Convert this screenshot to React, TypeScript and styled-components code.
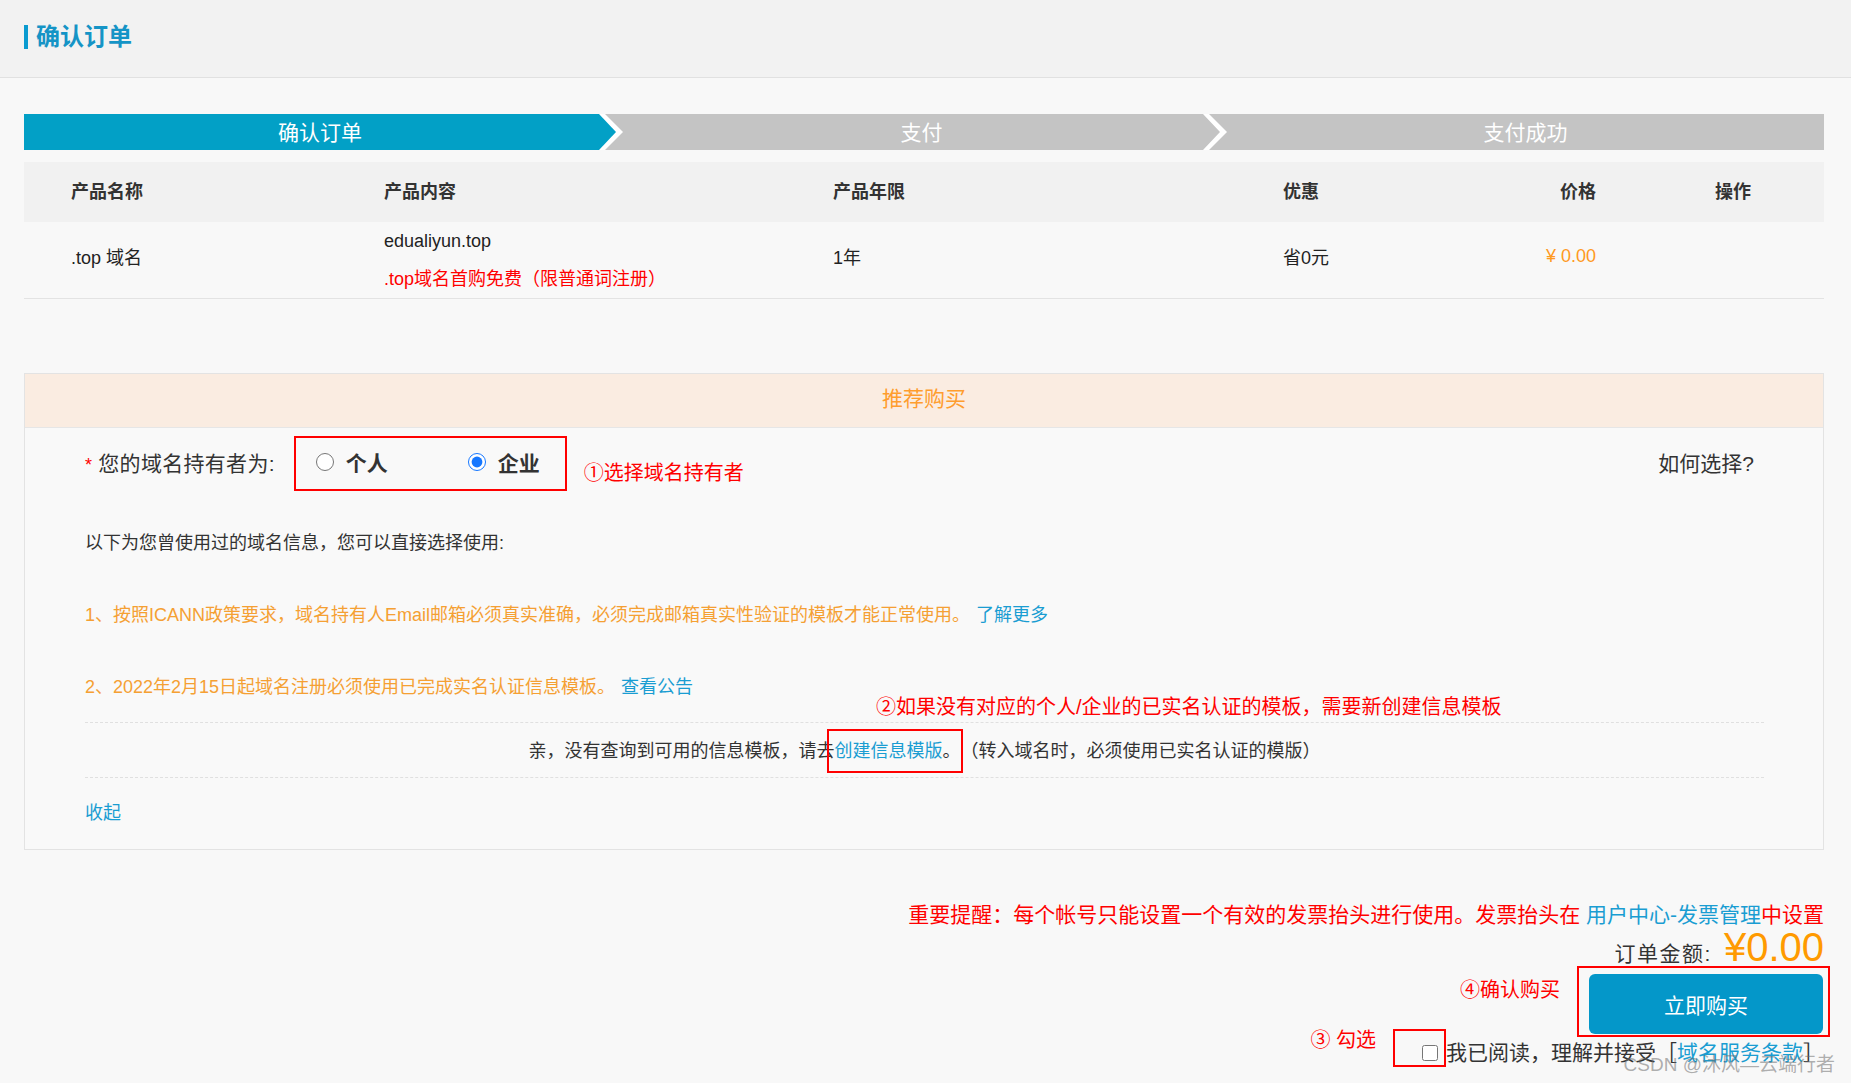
import styled, { createGlobalStyle } from "styled-components";

const GlobalStyle = createGlobalStyle`
  html, body {
    margin: 0;
    padding: 0;
  }

  body {
    background: #f8f8f8;
    font-family: "Liberation Sans", "Noto Sans CJK SC", sans-serif;
    color: #333;
  }

  * {
    box-sizing: border-box;
  }
`;

const App = () => {
  return (
    <Page>
      <GlobalStyle />
      <TopBar>
        <PageTitle>确认订单</PageTitle>
      </TopBar>
      <Main>
        <Steps>
          <Step $active $first>
            确认订单
          </Step>
          <Step>支付</Step>
          <Step $last>支付成功</Step>
        </Steps>

        <OrderTable>
          <TableRow $head>
            <Cell>产品名称</Cell>
            <Cell>产品内容</Cell>
            <Cell>产品年限</Cell>
            <Cell>优惠</Cell>
            <Cell $align="right">价格</Cell>
            <Cell $pad={119}>操作</Cell>
          </TableRow>
          <TableRow>
            <Cell>.top 域名</Cell>
            <ContentCell>
              <span>edualiyun.top</span>
              <Promo>.top域名首购免费（限普通词注册）</Promo>
            </ContentCell>
            <Cell>1年</Cell>
            <Cell>省0元</Cell>
            <Price>¥ 0.00</Price>
            <Cell />
          </TableRow>
        </OrderTable>

        <Panel>
          <PanelHead>推荐购买</PanelHead>
          <PanelBody>
            <HolderRow>
              <FieldLabel>
                <Required>*</Required>您的域名持有者为:
              </FieldLabel>
              <RadioFrame>
                <RadioOption $width={152}>
                  <Radio type="radio" name="holder" readOnly />
                  个人
                </RadioOption>
                <RadioOption>
                  <Radio type="radio" name="holder" checked readOnly />
                  企业
                </RadioOption>
              </RadioFrame>
              <HolderNote>①选择域名持有者</HolderNote>
              <HowTo>如何选择?</HowTo>
            </HolderRow>

            <Intro>以下为您曾使用过的域名信息，您可以直接选择使用:</Intro>

            <Rule>
              1、按照ICANN政策要求，域名持有人Email邮箱必须真实准确，必须完成邮箱真实性验证的模板才能正常使用。
              <TextLink>了解更多</TextLink>
            </Rule>
            <Rule>
              2、2022年2月15日起域名注册必须使用已完成实名认证信息模板。
              <TextLink>查看公告</TextLink>
            </Rule>

            <TemplateNote>
              ②如果没有对应的个人/企业的已实名认证的模板，需要新创建信息模板
            </TemplateNote>

            <EmptyTemplates>
              亲，没有查询到可用的信息模板，请去
              <Marked>
                <TextLink $flush>创建信息模版</TextLink>。
              </Marked>
              （转入域名时，必须使用已实名认证的模版）
            </EmptyTemplates>

            <Collapse>收起</Collapse>
          </PanelBody>
        </Panel>

        <Checkout>
          <InvoiceNotice>
            重要提醒：每个帐号只能设置一个有效的发票抬头进行使用。发票抬头在{" "}
            <TextLink $flush>用户中心-发票管理</TextLink>中设置
          </InvoiceNotice>
          <AmountRow>
            订单金额:<Amount>¥0.00</Amount>
          </AmountRow>
          <BuyRow>
            <StepNote $top={12}>④确认购买</StepNote>
            <ButtonFrame>
              <BuyButton>立即购买</BuyButton>
            </ButtonFrame>
          </BuyRow>
          <AgreeRow>
            <StepNote $top={-1}>③ 勾选</StepNote>
            <CheckFrame>
              <Checkbox type="checkbox" readOnly />
            </CheckFrame>
            <AgreeText>
              我已阅读，理解并接受［<TextLink $flush>域名服务条款</TextLink>］
            </AgreeText>
          </AgreeRow>
        </Checkout>
      </Main>
      <Watermark>CSDN @沐风—云端行者</Watermark>
    </Page>
  );
};

export default App;

const Page = styled.div`
  position: relative;
  min-height: 100vh;
`;

const TopBar = styled.header`
  height: 78px;
  background: #f2f2f2;
  border-bottom: 1px solid #e1e1e1;
  display: flex;
  align-items: center;
  padding: 0 0 4px 24px;
`;

const PageTitle = styled.h1`
  margin: 0;
  font-size: 24px;
  line-height: 24px;
  font-weight: bold;
  color: #1594c6;
  border-left: 4px solid #0a9bd0;
  padding-left: 8px;
`;

const Main = styled.main`
  padding: 36px 27px 0 24px;
`;

const Steps = styled.div`
  display: flex;
  height: 36px;
  background: #fff;
`;

const Step = styled.div<{ $active?: boolean; $first?: boolean; $last?: boolean }>`
  flex: ${(p) => (p.$first ? "0 0 592px" : "1")};
  margin-left: ${(p) => (p.$first ? "0" : "-11px")};
  padding: 0 0 3px ${(p) => (p.$first ? "0" : "18px")};
  display: flex;
  align-items: center;
  justify-content: center;
  background: ${(p) => (p.$active ? "#02a0c6" : "#c4c4c4")};
  color: #fff;
  font-size: 21px;
  clip-path: ${(p) =>
    p.$first
      ? "polygon(0 0, calc(100% - 17px) 0, 100% 50%, calc(100% - 17px) 100%, 0 100%)"
      : p.$last
      ? "polygon(0 0, 100% 0, 100% 100%, 0 100%, 18px 50%)"
      : "polygon(0 0, calc(100% - 17px) 0, 100% 50%, calc(100% - 17px) 100%, 0 100%, 18px 50%)"};
`;

const OrderTable = styled.div`
  margin-top: 12px;
`;

const TableRow = styled.div<{ $head?: boolean }>`
  display: grid;
  grid-template-columns: 313px 449px 450px 200px 113px 1fr;
  align-items: center;
  padding: 0 0 ${(p) => (p.$head ? "4px" : "8px")} 47px;
  min-height: ${(p) => (p.$head ? "60px" : "76px")};
  background: ${(p) => (p.$head ? "#f1f1f1" : "transparent")};
  border-bottom: ${(p) => (p.$head ? "none" : "1px solid #e3e3e3")};
  font-size: 18px;
  font-weight: ${(p) => (p.$head ? "bold" : "normal")};
  color: ${(p) => (p.$head ? "#333" : "#222")};
`;

const Cell = styled.div<{ $align?: string; $pad?: number }>`
  text-align: ${(p) => p.$align || "left"};
  padding-left: ${(p) => p.$pad || 0}px;
`;

const ContentCell = styled.div`
  display: flex;
  flex-direction: column;
  line-height: 38px;
  margin-bottom: -8px;
`;

const Promo = styled.span`
  color: #f00;
`;

const Price = styled.div`
  text-align: right;
  color: #ff9a1e;
`;

const Panel = styled.section`
  margin-top: 74px;
  border: 1px solid #e3e3e3;
  background: #f9f9f9;
`;

const PanelHead = styled.div`
  height: 54px;
  background: #faece1;
  border-bottom: 1px solid #e6e6e6;
  display: flex;
  align-items: center;
  justify-content: center;
  padding-bottom: 8px;
  color: #ff9d2e;
  font-size: 21px;
`;

const PanelBody = styled.div`
  padding: 8px 59px 23px 60px;
`;

const HolderRow = styled.div`
  display: flex;
  align-items: center;
  font-size: 21px;
`;

const FieldLabel = styled.span`
  margin: 0 19px 4px 0;
  color: #333;
  letter-spacing: 0.3px;
`;

const Required = styled.span`
  color: #f00;
  font-size: 18px;
  margin-right: 6px;
`;

const RadioFrame = styled.div`
  display: flex;
  align-items: center;
  width: 273px;
  height: 55px;
  border: 2px solid #f00;
  padding: 0 0 4px 20px;
`;

const RadioOption = styled.label<{ $width?: number }>`
  flex: none;
  width: ${(p) => (p.$width ? `${p.$width}px` : "auto")};
  display: flex;
  align-items: center;
  gap: 12px;
  font-weight: bold;
  color: #333;
`;

const Radio = styled.input`
  width: 18px;
  height: 18px;
  margin: 0;
  accent-color: #1677ff;
`;

const HolderNote = styled.span`
  margin: 18px 0 0 17px;
  color: #f00;
  font-size: 20px;
  line-height: 24px;
`;

const HowTo = styled.span`
  margin: 0 10px 4px auto;
  color: #333;
`;

const Intro = styled.p`
  margin: 38px 0 0;
  font-size: 18px;
  line-height: 28px;
  color: #333;
`;

const Rule = styled.p`
  margin: 44px 0 0;
  font-size: 18px;
  line-height: 28px;
  color: #f5a033;
`;

const TextLink = styled.a<{ $flush?: boolean }>`
  color: #1a9dd2;
  margin-left: ${(p) => (p.$flush ? "0" : "6px")};
  cursor: pointer;
`;

const TemplateNote = styled.div`
  margin: -4px 0 0 791px;
  color: #f00;
  font-size: 20px;
  line-height: 20px;
`;

const EmptyTemplates = styled.div`
  margin-top: 5px;
  height: 56px;
  border-top: 1px dashed #e0e0e0;
  border-bottom: 1px dashed #e0e0e0;
  display: flex;
  align-items: center;
  justify-content: center;
  padding-top: 1px;
  font-size: 18px;
  line-height: 26px;
  color: #333;
  white-space: nowrap;
`;

const Marked = styled.span`
  display: inline-block;
  border: 2px solid #f00;
  padding: 7px 0 7px 6px;
  margin: -9px -2px -9px -8px;
`;

const Collapse = styled.a`
  display: block;
  margin-top: 22px;
  font-size: 18px;
  line-height: 26px;
  color: #1a9dd2;
`;

const Checkout = styled.div`
  display: flex;
  flex-direction: column;
  align-items: flex-end;
  margin-top: 50px;
`;

const InvoiceNotice = styled.div`
  font-size: 21px;
  line-height: 30px;
  color: #f00;
`;

const AmountRow = styled.div`
  display: flex;
  align-items: baseline;
  margin-bottom: -5px;
  font-size: 21px;
  line-height: 35px;
  color: #333;
  letter-spacing: 1.5px;
`;

const Amount = styled.span`
  margin-left: 12px;
  font-size: 40px;
  letter-spacing: 0;
  color: #ff9a00;
`;

const BuyRow = styled.div`
  display: flex;
  align-items: flex-start;
`;

const StepNote = styled.span<{ $top: number }>`
  margin: ${(p) => p.$top}px 17px 0 0;
  color: #f00;
  font-size: 20px;
  line-height: 24px;
`;

const ButtonFrame = styled.div`
  border: 2px solid #f00;
  padding: 6px 5px 1px 10px;
  margin-right: -6px;
`;

const BuyButton = styled.button`
  display: block;
  width: 234px;
  height: 60px;
  border: none;
  border-radius: 6px;
  background: #0497c9;
  color: #fff;
  font-family: inherit;
  font-size: 21px;
  cursor: pointer;
`;

const AgreeRow = styled.div`
  display: flex;
  align-items: flex-start;
  margin-top: -8px;
`;

const CheckFrame = styled.div`
  width: 53px;
  height: 38px;
  border: 2px solid #f00;
  display: flex;
  align-items: flex-end;
  justify-content: flex-end;
  padding: 0 6px 4px 0;
`;

const Checkbox = styled.input`
  width: 16px;
  height: 16px;
  margin: 0;
`;

const AgreeText = styled.span`
  margin-top: 10px;
  font-size: 21px;
  line-height: 28px;
  color: #333;
`;

const Watermark = styled.div`
  position: absolute;
  right: 16px;
  bottom: 6px;
  font-size: 19px;
  line-height: 24px;
  color: rgba(110, 110, 110, 0.55);
  pointer-events: none;
`;
